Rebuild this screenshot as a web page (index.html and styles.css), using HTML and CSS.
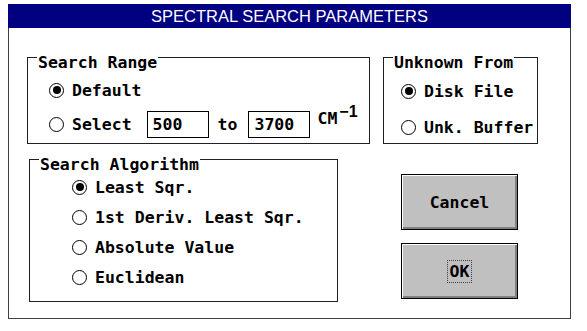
FILE: index.html
```html
<!DOCTYPE html>
<html lang="en">
<head>
    <meta charset="UTF-8">
    <title>Spectral Search Parameters</title>
    <link rel="stylesheet" href="styles.css">
</head>
<body>
    <div class="dialog">
        <div class="title-bar">SPECTRAL SEARCH PARAMETERS</div>
        <div class="dialog-body">
            <div class="top-row">
                <div class="group range-group">
                    <span class="group-label">Search Range</span>
                    <div class="option"><span class="radio checked"></span>Default</div>
                    <div class="option">
                        <span class="radio"></span>Select
                        <span class="field field-first">500</span>
                        <span class="to">to</span>
                        <span class="field">3700</span>
                        <span class="unit">CM<sup>&minus;1</sup></span>
                    </div>
                </div>
                <div class="group source-group">
                    <span class="group-label">Unknown From</span>
                    <div class="option"><span class="radio checked"></span>Disk File</div>
                    <div class="option"><span class="radio"></span>Unk. Buffer</div>
                </div>
            </div>

            <div class="bottom-row">
                <div class="group algo-group">
                    <span class="group-label">Search Algorithm</span>
                    <div class="option"><span class="radio checked"></span>Least Sqr.</div>
                    <div class="option"><span class="radio"></span>1st Deriv. Least Sqr.</div>
                    <div class="option"><span class="radio"></span>Absolute Value</div>
                    <div class="option"><span class="radio"></span>Euclidean</div>
                </div>
                <div class="button-column">
                    <button class="button">Cancel</button>
                    <button class="button"><span class="focus">OK</span></button>
                </div>
            </div>
        </div>
    </div>
</body>
</html>
```

FILE: styles.css
```css
body, html {
    margin: 0;
    padding: 0;
    background-color: #ffffff;
    color: #000000;
    font-family: "DejaVu Sans Mono", "Liberation Mono", monospace;
    font-weight: bold;
    font-size: 16.5px;
}

.dialog {
    width: 563px;
    margin: 4px 0 0 8px;
}

.title-bar {
    height: 24px;
    background-color: #000080;
    color: #ffffff;
    font-family: "Liberation Sans", Arial, sans-serif;
    font-weight: normal;
    font-size: 16.5px;
    line-height: 24px;
    text-align: center;
}

.dialog-body {
    height: 291px;
    box-sizing: border-box;
    border: 1px solid #404040;
    border-top: none;
    padding: 29px 0 0 18px;
    background-color: #ffffff;
}

.top-row {
    display: flex;
    gap: 13px;
}

.bottom-row {
    display: flex;
    margin: 15px 0 0 2px;
}

.group {
    position: relative;
    box-sizing: border-box;
    border: 1px solid #202020;
    display: flex;
    flex-direction: column;
}

.group-label {
    position: absolute;
    top: -4px;
    left: 9px;
    padding: 0 1px;
    background-color: #ffffff;
    line-height: 17px;
}

.range-group {
    width: 343px;
    height: 87px;
    padding: 18px 0 0 21px;
    gap: 6px;
}

.source-group {
    width: 155px;
    height: 87px;
    padding: 19px 0 0 17px;
    gap: 8px;
}

.algo-group {
    width: 309px;
    height: 143px;
    padding: 13px 0 0 42px;
    gap: 2px;
}

.option {
    display: flex;
    align-items: center;
    height: 28px;
    line-height: 17px;
    white-space: nowrap;
}

.radio {
    width: 15px;
    height: 15px;
    box-sizing: border-box;
    border: 1px solid #000000;
    border-radius: 50%;
    margin-right: 8px;
    flex-shrink: 0;
    display: flex;
    align-items: center;
    justify-content: center;
}

.radio.checked {
    border-width: 1.5px;
}

.radio.checked::after {
    content: "";
    width: 8px;
    height: 8px;
    border-radius: 50%;
    background-color: #000000;
}

.field {
    width: 62px;
    height: 27px;
    box-sizing: border-box;
    border: 1px solid #000000;
    padding-left: 5px;
    display: flex;
    align-items: center;
    margin-left: 11px;
}

.field-first {
    margin-left: 15px;
}

.to {
    margin-left: 9px;
}

.unit {
    align-self: flex-start;
    margin-left: 7px;
}

.unit sup {
    font-family: "Liberation Sans", Arial, sans-serif;
    font-size: 16px;
    line-height: 0;
    vertical-align: 7px;
    margin-left: 2px;
}

.button-column {
    display: flex;
    flex-direction: column;
    gap: 13px;
    margin: 15px 0 0 63px;
}

.button {
    width: 117px;
    height: 56px;
    background-color: #c0c0c0;
    border: 1px solid #000000;
    box-shadow: inset 1px 1px #ffffff, inset -2px -2px #808080;
    font-family: inherit;
    font-weight: bold;
    font-size: 16.5px;
    color: #000000;
    padding: 0;
    display: flex;
    align-items: center;
    justify-content: center;
}

.focus {
    outline: 1px dotted #404040;
    padding: 2px 2px;
    line-height: 17px;
}
```
